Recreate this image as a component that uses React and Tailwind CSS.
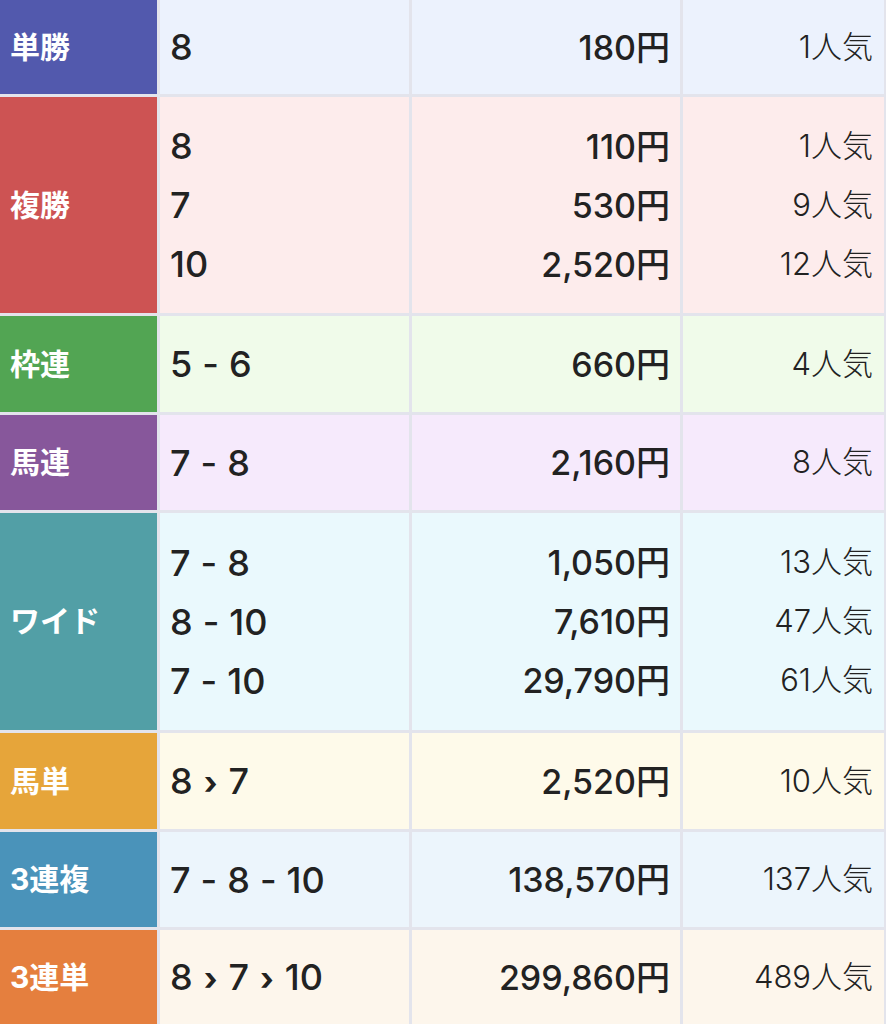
import React from 'react';

const rows = [
  { label: '単勝', labelBg: 'bg-[#5259ad]', bg: 'bg-[#ecf2fd]', h: 'h-[94px]', lines: [['8', '180円', '1人気']] },
  {
    label: '複勝', labelBg: 'bg-[#cd5353]', bg: 'bg-[#fdecec]', h: 'h-[216px]',
    lines: [['8', '110円', '1人気'], ['7', '530円', '9人気'], ['10', '2,520円', '12人気']],
  },
  { label: '枠連', labelBg: 'bg-[#52a553]', bg: 'bg-[#f0fbea]', h: 'h-[96px]', lines: [['5 - 6', '660円', '4人気']] },
  { label: '馬連', labelBg: 'bg-[#87579b]', bg: 'bg-[#f6eafc]', h: 'h-[95px]', lines: [['7 - 8', '2,160円', '8人気']] },
  {
    label: 'ワイド', labelBg: 'bg-[#529fa6]', bg: 'bg-[#eaf9fd]', h: 'h-[217px]',
    lines: [['7 - 8', '1,050円', '13人気'], ['8 - 10', '7,610円', '47人気'], ['7 - 10', '29,790円', '61人気']],
  },
  { label: '馬単', labelBg: 'bg-[#e6a53a]', bg: 'bg-[#fefaea]', h: 'h-[96px]', lines: [['8 › 7', '2,520円', '10人気']] },
  { label: '3連複', labelBg: 'bg-[#4a93ba]', bg: 'bg-[#ecf5fc]', h: 'h-[95px]', lines: [['7 - 8 - 10', '138,570円', '137人気']] },
  { label: '3連単', labelBg: 'bg-[#e57f3e]', bg: 'bg-[#fdf6ec]', h: 'h-[94px]', lines: [['8 › 7 › 10', '299,860円', '489人気']] },
];

function Combo({ text }) {
  // chevrons are drawn a bit smaller and bolder than the digits
  const parts = text.split(' ');
  return (
    <span>
      {parts.map((p, i) =>
        p === '›' ? (
          <span key={i} className="mx-[11px] font-bold text-[32px]">›</span>
        ) : p === '-' ? (
          <span key={i} className="mx-[10px]">-</span>
        ) : (
          <span key={i}>{p}</span>
        )
      )}
    </span>
  );
}

export default function App() {
  return (
    <div className="w-[886px] h-[1024px] overflow-hidden bg-[#e3e4ec] flex flex-col gap-[3px] pr-[2px] font-['Inter','Noto_Sans_CJK_JP',sans-serif] text-[#222]">
      {rows.map((r) => (
        <div key={r.label} className={`grid grid-cols-[157px_249px_268px_201px] gap-[3px] shrink-0 ${r.h}`}>
          <div className={`${r.labelBg} flex items-center pl-[10px] text-white font-bold text-[30px]`}>
            {r.label}
          </div>
          <div className={`${r.bg} flex flex-col justify-center pl-[10px] text-[36px] font-medium`}>
            {r.lines.map((l, i) => (
              <div key={i} className="h-[59px] flex items-center">
                <Combo text={l[0]} />
              </div>
            ))}
          </div>
          <div className={`${r.bg} flex flex-col justify-center items-end pr-[10px] text-[34px] font-medium`}>
            {r.lines.map((l, i) => (
              <div key={i} className="h-[59px] flex items-center">{l[1]}</div>
            ))}
          </div>
          <div className={`${r.bg} flex flex-col justify-center items-end pr-[11px] text-[31px] font-light`}>
            {r.lines.map((l, i) => (
              <div key={i} className="h-[59px] flex items-center">{l[2]}</div>
            ))}
          </div>
        </div>
      ))}
    </div>
  );
}
